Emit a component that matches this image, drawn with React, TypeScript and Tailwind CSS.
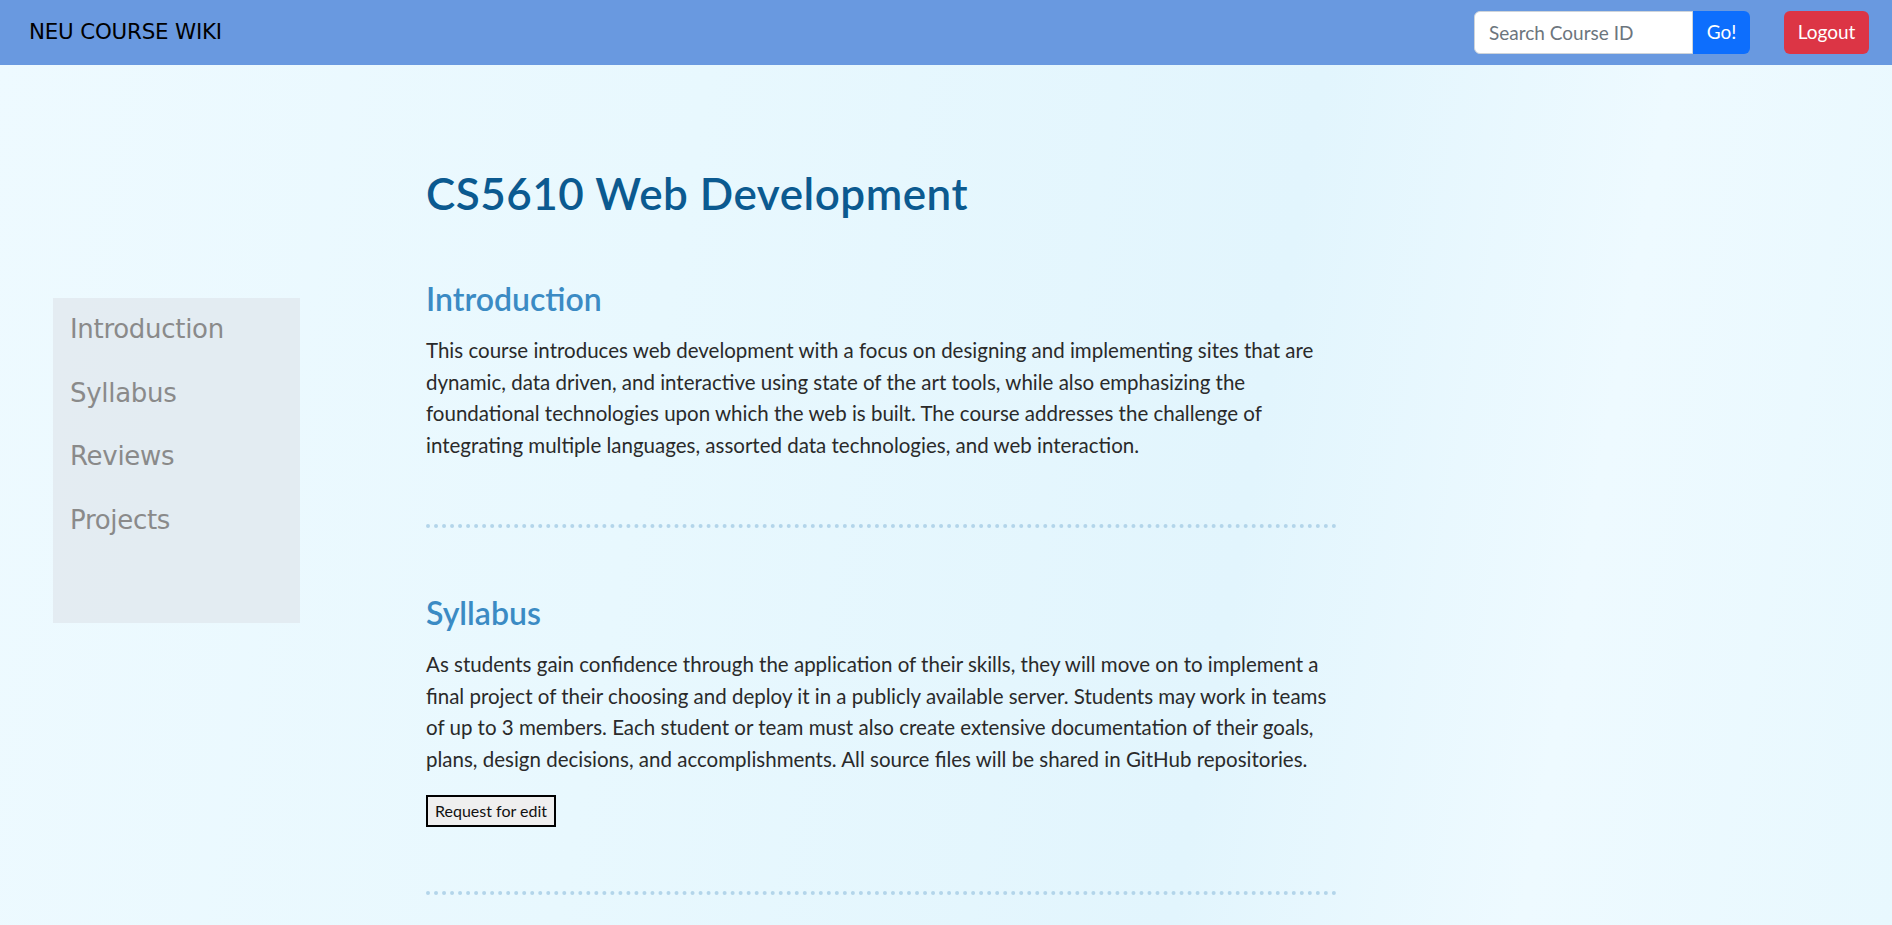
import React from 'react';

const intro = [
  'This course introduces web development with a focus on designing and implementing sites that are',
  'dynamic, data driven, and interactive using state of the art tools, while also emphasizing the',
  'foundational technologies upon which the web is built. The course addresses the challenge of',
  'integrating multiple languages, assorted data technologies, and web interaction.',
];

const syllabus = [
  'As students gain confidence through the application of their skills, they will move on to implement a',
  'final project of their choosing and deploy it in a publicly available server. Students may work in teams',
  'of up to 3 members. Each student or team must also create extensive documentation of their goals,',
  'plans, design decisions, and accomplishments. All source files will be shared in GitHub repositories.',
];

const navItems = ['Introduction', 'Syllabus', 'Reviews', 'Projects'];

function Paragraph({ lines }: { lines: string[] }) {
  return (
    <p className="text-[20.5px] leading-[31.5px] text-[#2a2a2a]">
      {lines.map((l) => (
        <span key={l} className="block whitespace-nowrap">
          {l}
        </span>
      ))}
    </p>
  );
}

export default function App() {
  return (
    <div className="min-h-screen bg-[linear-gradient(100deg,#eefaff_0%,#e8f8fe_35%,#e2f5fd_65%,#eefaff_82%,#e8f8fe_100%)] font-['Lato',sans-serif]">
      {/* Navbar */}
      <nav className="h-[65px] bg-[#6999e0] flex items-center justify-between pl-[29px] pr-[23px]">
        <span className="font-['DejaVu_Sans',sans-serif] text-[21.4px] tracking-[-0.2px] text-black">NEU COURSE WIKI</span>
        <div className="flex items-center">
          <form className="flex" onSubmit={(e) => e.preventDefault()}>
            <input
              placeholder="Search Course ID"
              className="w-[219px] h-[43px] bg-white border border-[#ced4da] rounded-l-[6px] px-[14px] text-[19px] placeholder:text-[#6c757d] outline-none"
            />
            <button className="w-[57px] h-[43px] bg-[#0d6efd] text-white text-[19px] rounded-r-[6px]">Go!</button>
          </form>
          <button className="ml-[34px] w-[85px] h-[43px] bg-[#dc3545] text-white text-[19px] rounded-[6px]">Logout</button>
        </div>
      </nav>

      <div className="flex">
        {/* Sidebar */}
        <aside className="ml-[53px] mt-[233px] w-[247px] h-[325px] bg-[#e2eaf1]/90 self-start">
          <ul className="font-['DejaVu_Sans',sans-serif] text-[26px] tracking-[-0.3px] text-[#8a8a8a] pl-[17px]">
            {navItems.map((n) => (
              <li key={n} className="leading-[63.5px]">
                {n}
              </li>
            ))}
          </ul>
        </aside>

        {/* Content */}
        <main className="ml-[126px] w-[911px] pt-[102px]">
          <h1 className="text-[44px] leading-[52px] tracking-[0.5px] font-semibold text-[#0b5a90]">CS5610 Web Development</h1>

          <section className="mt-[61px] border-b-4 border-dotted border-[#b3d5ea] pb-[63px]">
            <h2 className="text-[32px] leading-[38px] font-semibold text-[#3b8bc4]">Introduction</h2>
            <div className="mt-[17px]">
              <Paragraph lines={intro} />
            </div>
          </section>

          <section className="mt-[66px] border-b-4 border-dotted border-[#b3d5ea] pb-[64px]">
            <h2 className="text-[32px] leading-[38px] font-semibold text-[#3b8bc4]">Syllabus</h2>
            <div className="mt-[17px]">
              <Paragraph lines={syllabus} />
            </div>
            <button className="mt-[20px] h-[32px] px-[7px] border-2 border-black bg-[#efefef] text-[16px] text-[#111]">
              Request for edit
            </button>
          </section>
        </main>
      </div>
    </div>
  );
}
